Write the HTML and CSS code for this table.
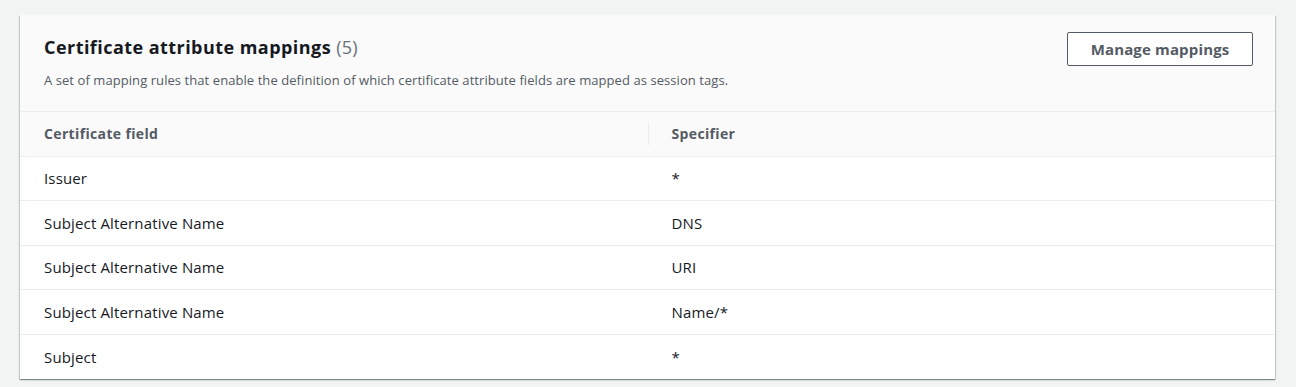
FILE: index.html
```html
<!DOCTYPE html>
<html lang="en">
<head>
<meta charset="utf-8">
<title>Certificate attribute mappings</title>
<link rel="stylesheet" href="styles.css">
</head>
<body>
  <section class="container">
    <header class="container-header">
      <div class="header-text">
        <h2 class="title">Certificate attribute mappings <span class="counter">(5)</span></h2>
        <p class="description">A set of mapping rules that enable the definition of which certificate attribute fields are mapped as session tags.</p>
      </div>
      <button class="btn" type="button">Manage mappings</button>
    </header>
    <table class="table">
      <thead>
        <tr>
          <th><span class="th-label">Certificate field</span></th>
          <th class="with-divider"><span class="th-label">Specifier</span></th>
        </tr>
      </thead>
      <tbody>
        <tr><td>Issuer</td><td>*</td></tr>
        <tr><td>Subject Alternative Name</td><td>DNS</td></tr>
        <tr><td>Subject Alternative Name</td><td>URI</td></tr>
        <tr><td>Subject Alternative Name</td><td>Name/*</td></tr>
        <tr><td>Subject</td><td>*</td></tr>
      </tbody>
    </table>
  </section>
</body>
</html>
```
FILE: styles.css
```css
html, body {
  margin: 0;
  padding: 0;
}

body {
  background: #f2f3f3;
  font-family: "Open Sans", "Noto Sans", Arial, sans-serif;
  color: #16191f;
  padding: 15px 21px 8px 20px;
}

.container {
  background: #ffffff;
  box-shadow: 0 1px 1px 0 rgba(0, 28, 36, 0.3),
              1px 1px 1px 0 rgba(0, 28, 36, 0.15),
              -1px 1px 1px 0 rgba(0, 28, 36, 0.15);
}

.container-header {
  background: #fafafa;
  display: flex;
  justify-content: space-between;
  align-items: flex-start;
  padding: 18px 22px 0 24px;
  height: 97px;
  box-sizing: border-box;
  border-bottom: 1px solid #eaeded;
}

.title {
  margin: 0;
  font-size: 18px;
  line-height: 28px;
  font-weight: 700;
  color: #16191f;
  letter-spacing: 0.45px;
}

.counter {
  font-weight: 400;
  color: #687078;
  letter-spacing: 0.2px;
}

.description {
  margin: 10px 0 0;
  font-size: 13px;
  line-height: 18px;
  color: #545b64;
  letter-spacing: 0.07px;
}

.btn {
  margin-top: -1px;
  width: 186px;
  height: 34px;
  background: #ffffff;
  border: 1px solid #545b64;
  border-radius: 2px;
  font-family: inherit;
  font-size: 15px;
  font-weight: 700;
  color: #545b64;
  letter-spacing: 0.15px;
  cursor: pointer;
}

.table {
  width: 100%;
  border-collapse: collapse;
  table-layout: fixed;
}

.table th,
.table td {
  text-align: left;
  padding: 0 24px;
  border-bottom: 1px solid #eaeded;
}

.table th {
  background: #fafafa;
  height: 43.5px;
  font-size: 14px;
  font-weight: 700;
  color: #545b64;
  letter-spacing: 0.35px;
  position: relative;
}

.table th.with-divider::before {
  content: "";
  position: absolute;
  left: 0;
  top: 11px;
  bottom: 11px;
  border-left: 1px solid #eaeded;
}

.table td {
  height: 43.5px;
  font-size: 15px;
  letter-spacing: 0.15px;
  color: #16191f;
}

.table tbody tr:last-child td {
  height: 44.5px;
  border-bottom: none;
}
```
